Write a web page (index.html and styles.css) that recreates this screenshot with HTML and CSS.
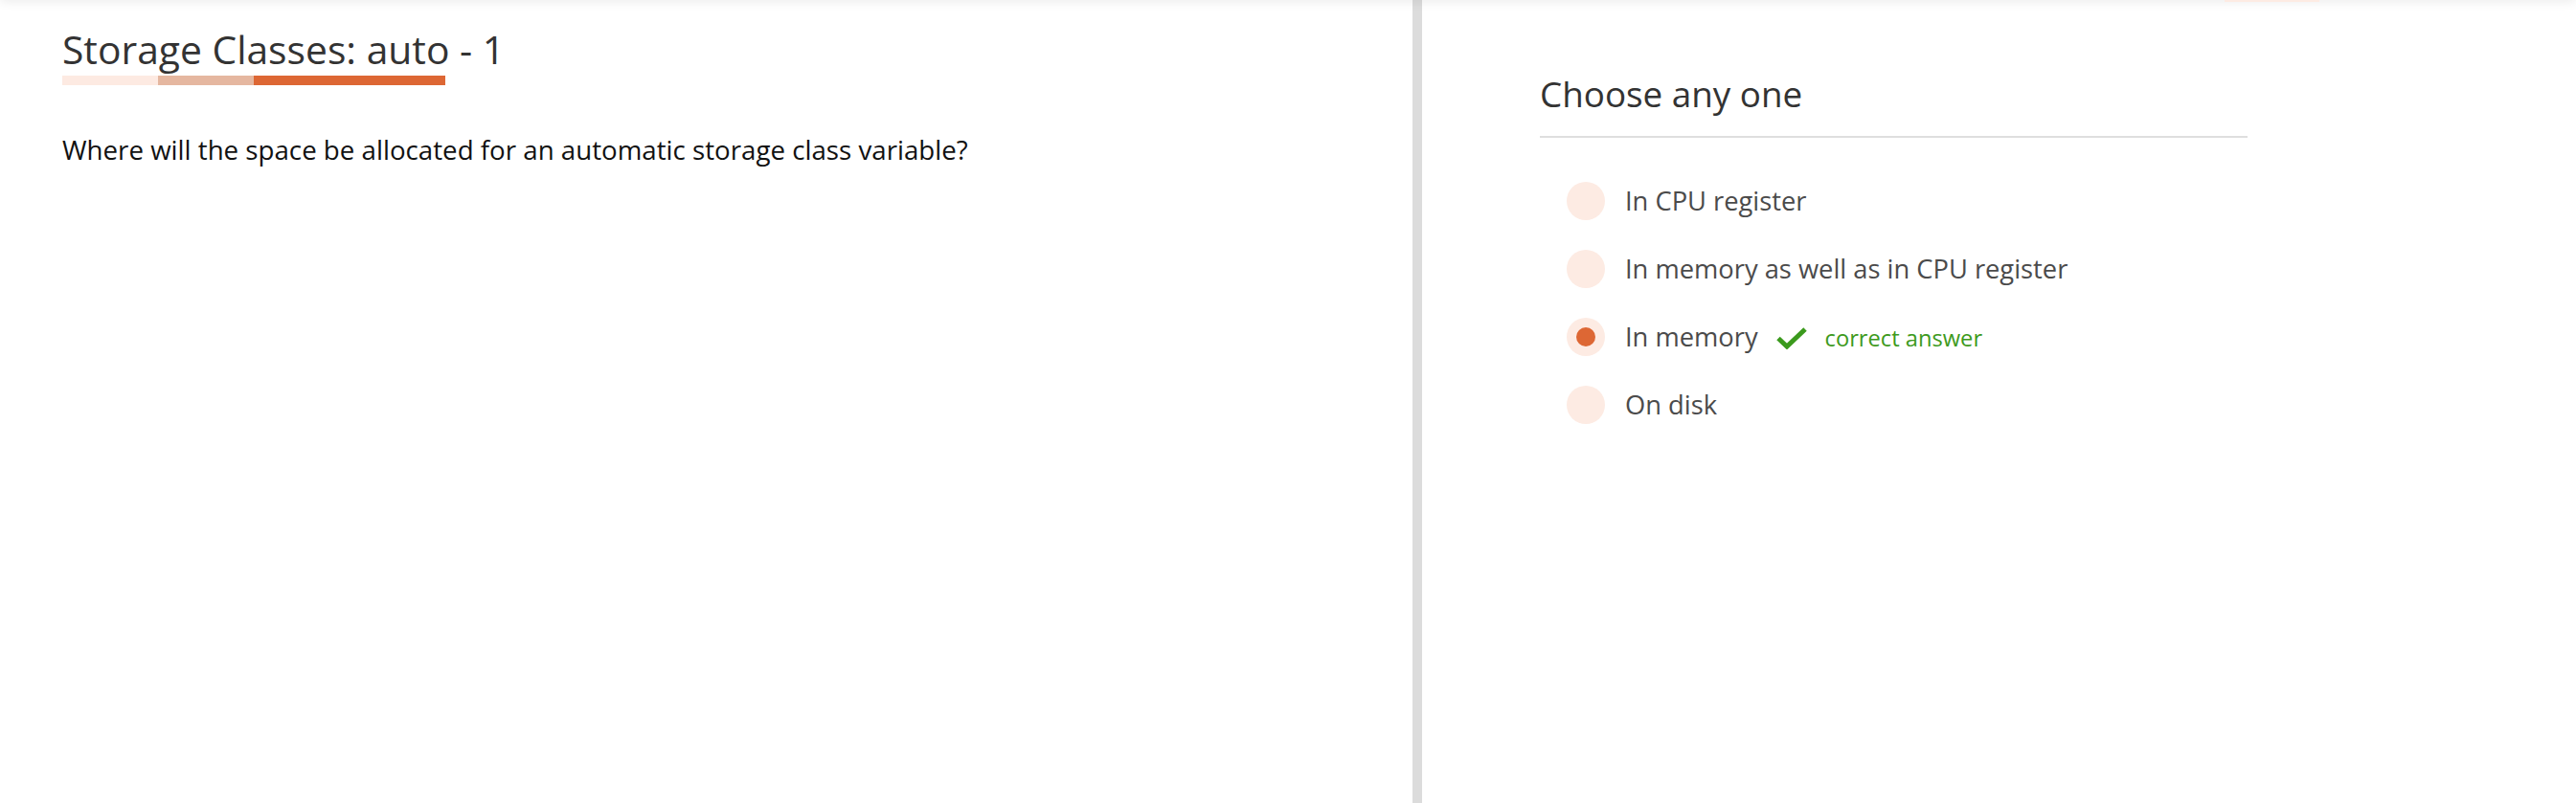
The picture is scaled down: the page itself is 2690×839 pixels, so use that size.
FILE: index.html
```html
<!DOCTYPE html>
<html lang="en">
<head>
<meta charset="utf-8">
<title>Storage Classes: auto - 1</title>
<link rel="stylesheet" href="styles.css">
</head>
<body>
<div class="topbar"><span class="topbar-tab"></span></div>
<main class="quiz">
  <section class="question-pane">
    <h1 class="title">Storage Classes: auto - 1</h1>
    <div class="progress">
      <span class="seg seg-1"></span>
      <span class="seg seg-2"></span>
      <span class="seg seg-3"></span>
    </div>
    <p class="question">Where will the space be allocated for an automatic storage class variable?</p>
  </section>
  <section class="answer-pane">
    <div class="answer-box">
      <h2 class="choose">Choose any one</h2>
      <ul class="options">
        <li class="option"><span class="radio"></span><span class="label">In CPU register</span></li>
        <li class="option"><span class="radio"></span><span class="label">In memory as well as in CPU register</span></li>
        <li class="option selected"><span class="radio"><span class="dot"></span></span><span class="label">In memory</span>
          <svg class="check" width="32" height="23" viewBox="0 0 32 23" aria-hidden="true"><polyline points="2,11.5 11,20 30,2" fill="none" stroke="#3b9a1d" stroke-width="5"/></svg>
          <span class="correct">correct answer</span></li>
        <li class="option"><span class="radio"></span><span class="label">On disk</span></li>
      </ul>
    </div>
  </section>
</main>
</body>
</html>
```

FILE: styles.css
```css
* { box-sizing: border-box; }

html, body {
  margin: 0;
  padding: 0;
  height: 100%;
  background: #fff;
  font-family: "Open Sans", "Noto Sans", sans-serif;
}

.topbar {
  position: fixed;
  top: -12px;
  left: 0;
  right: 0;
  height: 12px;
  background: #fff;
  box-shadow: 0 1px 12px rgba(0, 0, 0, 0.09);
  z-index: 5;
}

.topbar-tab {
  position: absolute;
  left: 2323px;
  top: 100%;
  width: 99px;
  height: 2px;
  background: #fdebe3;
}

.quiz {
  display: flex;
  height: 100vh;
}

.question-pane {
  flex: 0 0 1485px;
  border-right: 10px solid #dcdcdc;
  padding: 27px 0 0 65px;
}

.title {
  margin: 0;
  font-size: 40.8px;
  line-height: 48px;
  font-weight: 400;
  color: #333;
}

.progress {
  display: flex;
  width: 400px;
  height: 10px;
  margin-top: 4px;
}

.seg { display: block; height: 100%; }
.seg-1 { width: 100px; background: #fdeae2; }
.seg-2 { width: 100px; background: #e5b7a0; }
.seg-3 { width: 200px; background: #dd6734; }

.question {
  margin: 49px 0 0;
  font-size: 27.7px;
  line-height: 36px;
  color: #111;
}

.answer-pane {
  flex: 1;
  padding: 76px 0 0 123px;
}

.answer-box {
  width: 739px;
}

.choose {
  margin: 0;
  font-size: 36.8px;
  line-height: 44px;
  font-weight: 400;
  color: #333;
  padding-bottom: 22px;
  border-bottom: 2px solid #dedede;
}

.options {
  list-style: none;
  margin: 46px 0 0;
  padding: 0 0 0 28px;
  display: flex;
  flex-direction: column;
  gap: 31px;
}

.option {
  display: flex;
  align-items: center;
  height: 40px;
}

.radio {
  flex: 0 0 40px;
  width: 40px;
  height: 40px;
  border-radius: 50%;
  background: #fdebe3;
  display: flex;
  align-items: center;
  justify-content: center;
  margin-right: 21px;
}

.dot {
  width: 20px;
  height: 20px;
  border-radius: 50%;
  background: #dd6734;
}

.label {
  font-size: 27.3px;
  line-height: 40px;
  color: #4b4b4b;
  white-space: nowrap;
}

.check {
  margin-left: 19px;
  margin-top: 2px;
  flex: 0 0 auto;
}

.correct {
  margin-left: 19px;
  font-size: 23.7px;
  line-height: 40px;
  color: #3d9a20;
  padding-top: 2px;
}
```
